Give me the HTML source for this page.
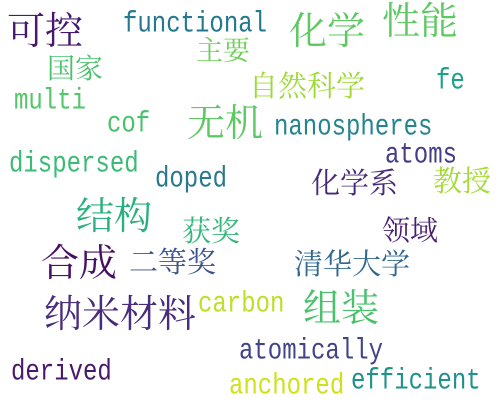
<!DOCTYPE html>
<html><head><meta charset="utf-8"><style>
body{margin:0;width:500px;height:400px;background:#fff;position:relative;overflow:hidden}
div{position:absolute;line-height:1;white-space:nowrap}
.c{font-family:"Liberation Serif","Noto Serif CJK SC",serif}
.m{font-family:"Liberation Mono",monospace;font-size:24px;transform:scaleY(1.22);transform-origin:0 0;margin-top:2px}
</style></head><body>
<div class="c" style="left:7px;top:13px;font-size:38px;color:#46196e">可控</div>
<div class="m" style="left:123px;top:9px;color:#24798e">functional</div>
<div class="c" style="left:289px;top:13px;font-size:38px;color:#5ec962">化学</div>
<div class="c" style="left:382px;top:3px;font-size:38px;color:#5ec962">性能</div>
<div class="c" style="left:196px;top:38px;font-size:27px;color:#6ece58">主要</div>
<div class="c" style="left:47px;top:56px;font-size:28px;color:#4ac16d">国家</div>
<div class="c" style="left:249px;top:73px;font-size:29px;color:#a0da39">自然科学</div>
<div class="m" style="left:436px;top:66px;color:#1fa187">fe</div>
<div class="m" style="left:14px;top:86px;color:#54c568">multi</div>
<div class="m" style="left:107px;top:109px;color:#4ac16d">cof</div>
<div class="c" style="left:187px;top:105px;font-size:38px;color:#5ec962">无机</div>
<div class="m" style="left:274px;top:112px;color:#25858e">nanospheres</div>
<div class="m" style="left:9px;top:149px;color:#3bbb75">dispersed</div>
<div class="m" style="left:385px;top:140px;color:#433e85">atoms</div>
<div class="m" style="left:155px;top:164px;color:#2a788e">doped</div>
<div class="c" style="left:311px;top:170px;font-size:29px;color:#482878">化学系</div>
<div class="c" style="left:433px;top:168px;font-size:29px;color:#a5db36">教授</div>
<div class="c" style="left:76px;top:198px;font-size:38px;color:#2ab07f">结构</div>
<div class="c" style="left:182px;top:218px;font-size:29px;color:#35b779">获奖</div>
<div class="c" style="left:382px;top:218px;font-size:28px;color:#481f70">领域</div>
<div class="c" style="left:41px;top:245px;font-size:38px;color:#471063">合成</div>
<div class="c" style="left:129px;top:249px;font-size:29px;color:#3b528b">二等奖</div>
<div class="c" style="left:294px;top:251px;font-size:29px;color:#31688e">清华大学</div>
<div class="m" style="left:198px;top:289px;color:#bddf26">carbon</div>
<div class="c" style="left:303px;top:290px;font-size:38px;color:#4ac16d">组装</div>
<div class="c" style="left:44px;top:296px;font-size:38px;color:#472d7b">纳米材料</div>
<div class="m" style="left:239px;top:336px;color:#414487">atomically</div>
<div class="m" style="left:11px;top:357px;color:#48186a">derived</div>
<div class="m" style="left:229px;top:371px;color:#d0e11c">anchored</div>
<div class="m" style="left:351px;top:366px;color:#21918c">efficient</div>
</body></html>
